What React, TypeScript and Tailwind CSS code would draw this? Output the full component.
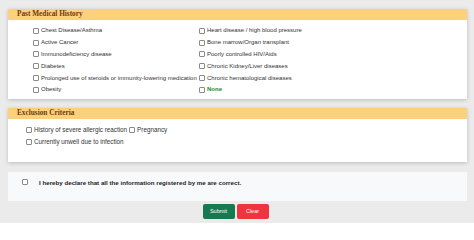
import React from "react";

const left = [
  "Chest Disease/Asthma",
  "Active Cancer",
  "Immunodeficiency disease",
  "Diabetes",
  "Prolonged use of steroids or immunity-lowering medication",
  "Obesity",
];

const right = [
  "Heart disease / high blood pressure",
  "Bone marrow/Organ transplant",
  "Poorly controlled HIV/Aids",
  "Chronic Kidney/Liver diseases",
  "Chronic hematological diseases",
  "None",
];

function Box() {
  return <span className="inline-block w-[6px] h-[6px] border-[0.5px] border-[#8a8a8a] rounded-[1px] bg-white shrink-0" />;
}

function Item({ label, green }: { label: string; green?: boolean }) {
  return (
    <label className="flex items-center gap-[2px] h-[11.8px]">
      <Box />
      <span className={green ? "text-[#1e8a2e] font-bold" : "text-[#333]"}>{label}</span>
    </label>
  );
}

function Header({ title }: { title: string }) {
  return (
    <div className="h-[11px] bg-[#fdd17a] flex items-center px-[9px] font-['Liberation_Serif',serif] font-bold text-[7.3px] text-[#6e3a0a]">
      {title}
    </div>
  );
}

export default function App() {
  return (
    <div className="w-[474px] h-[223px] bg-[#ebebeb] pt-[9px] pl-[8px] pr-[7px] font-['Liberation_Sans',sans-serif] text-[6px] overflow-hidden">
      <section className="bg-white shadow-[0_1px_4px_rgba(0,0,0,0.2)] h-[90px]">
        <Header title="Past Medical History" />
        <div className="grid grid-cols-[166px_1fr] pl-[25px] pt-[5px]">
          <div className="flex flex-col">
            {left.map((l) => (
              <Item key={l} label={l} />
            ))}
          </div>
          <div className="flex flex-col">
            {right.map((l) => (
              <Item key={l} label={l} green={l === "None"} />
            ))}
          </div>
        </div>
      </section>

      <section className="bg-white shadow-[0_1px_4px_rgba(0,0,0,0.2)] h-[54px] mt-[9px]">
        <Header title="Exclusion Criteria" />
        <div className="pl-[18px] pt-[5px] flex flex-col text-[6.3px]">
          <div className="flex items-center gap-[2px] h-[12px]">
            <Box />
            <span className="text-[#333]">History of severe allergic reaction</span>
            <Box />
            <span className="text-[#333]">Pregnancy</span>
          </div>
          <div className="flex items-center gap-[2px] h-[12px]">
            <Box />
            <span className="text-[#333]">Currently unwell due to infection</span>
          </div>
        </div>
      </section>

      <section className="bg-[#f8f9fb] h-[29px] mt-[10px] flex items-start pt-[6px] pl-[14px]">
        <span className="mt-[1px]"><Box /></span>
        <span className="ml-[11px] font-bold text-[#222] text-[6.2px]">
          I hereby declare that all the information registered by me are correct.
        </span>
      </section>

      <div className="flex justify-center gap-[2px] mt-[3px] pr-[4px]">
        <button className="w-[32px] h-[15px] bg-[#157a4e] text-white text-[5.5px] rounded-[2px]">Submit</button>
        <button className="w-[32px] h-[15px] bg-[#ee353d] text-white text-[5.5px] rounded-[2px]">Clear</button>
      </div>
    </div>
  );
}
